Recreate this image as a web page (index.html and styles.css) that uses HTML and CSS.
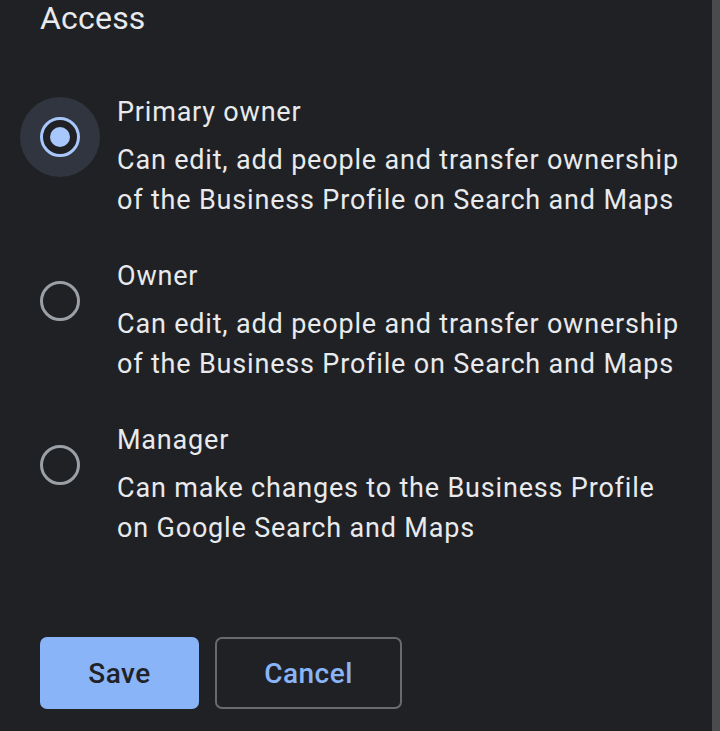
FILE: index.html
```html
<!DOCTYPE html>
<html>
<head>
<meta charset="utf-8">
<link rel="stylesheet" href="styles.css">
</head>
<body>
<div class="page">
  <main class="content">
    <h1 class="heading">Access</h1>
    <div class="options">
      <div class="option">
        <div class="radio selected"><span class="dot"></span></div>
        <div class="text">
          <div class="title">Primary owner</div>
          <div class="desc">Can edit, add people and transfer ownership of the Business Profile on Search and Maps</div>
        </div>
      </div>
      <div class="option">
        <div class="radio"></div>
        <div class="text">
          <div class="title">Owner</div>
          <div class="desc">Can edit, add people and transfer ownership of the Business Profile on Search and Maps</div>
        </div>
      </div>
      <div class="option">
        <div class="radio"></div>
        <div class="text">
          <div class="title">Manager</div>
          <div class="desc">Can make changes to the Business Profile on Google Search and Maps</div>
        </div>
      </div>
    </div>
    <div class="actions">
      <button class="btn btn-primary">Save</button>
      <button class="btn btn-outline">Cancel</button>
    </div>
  </main>
  <div class="scrollbar"></div>
</div>
</body>
</html>
```
FILE: styles.css
```css
* { box-sizing: border-box; }
html, body {
  margin: 0;
  padding: 0;
  height: 100%;
  background: #202124;
  overflow: hidden;
}
body {
  font-family: Roboto, "Liberation Sans", sans-serif;
  color: #e8eaed;
}
.page {
  display: flex;
  height: 731px;
}
.content {
  flex: 1;
  padding-left: 40px;
}
.scrollbar {
  width: 8px;
  background: #4a4b4d;
}
.heading {
  margin: 0;
  font-size: 32px;
  font-weight: 400;
  line-height: 36px;
  letter-spacing: 0.2px;
  color: #e8eaed;
}
.options {
  display: flex;
  flex-direction: column;
  gap: 36px;
  margin-top: 56px;
}
.option {
  display: flex;
  align-items: flex-start;
}
.radio {
  width: 40px;
  height: 40px;
  margin-top: 25px;
  margin-right: 37px;
  border: 3px solid #9aa0a6;
  border-radius: 50%;
  flex: none;
  display: flex;
  align-items: center;
  justify-content: center;
}
.radio.selected {
  border-color: #a8c7fa;
  box-shadow: 0 0 0 20px #30353f;
}
.dot {
  width: 20px;
  height: 20px;
  border-radius: 50%;
  background: #a8c7fa;
}
.text {
  width: 570px;
}
.title {
  font-size: 27px;
  line-height: 40px;
  letter-spacing: 0.8px;
  margin-bottom: 8px;
}
.desc {
  font-size: 27px;
  line-height: 40px;
  letter-spacing: 0.82px;
}
.actions {
  display: flex;
  gap: 16px;
  margin-top: 89px;
}
.btn {
  height: 72px;
  border-radius: 7px;
  font-family: Roboto, "Liberation Sans", sans-serif;
  font-size: 28px;
  font-weight: 500;
  letter-spacing: 0.5px;
  padding: 0;
}
.btn-primary {
  width: 159px;
  background: #8ab4f8;
  border: none;
  color: #1f2329;
}
.btn-outline {
  width: 187px;
  background: transparent;
  border: 2px solid #686a6d;
  color: #8ab4f8;
}
```
